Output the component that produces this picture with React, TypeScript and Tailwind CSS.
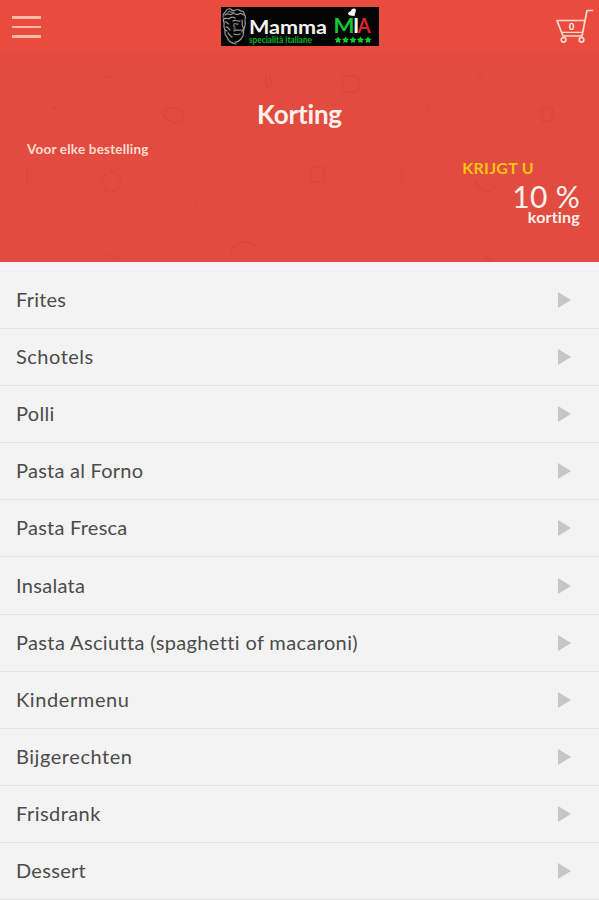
import { useState } from 'react'

interface Category {
  id: string
  name: string
  tracking: string
}

const categories: Category[] = [
  { id: 'frites', name: 'Frites', tracking: 'tracking-[0.2px]' },
  { id: 'schotels', name: 'Schotels', tracking: 'tracking-[0.5px]' },
  { id: 'polli', name: 'Polli', tracking: 'tracking-[0.3px]' },
  { id: 'forno', name: 'Pasta al Forno', tracking: 'tracking-[0.25px]' },
  { id: 'fresca', name: 'Pasta Fresca', tracking: 'tracking-[0.25px]' },
  { id: 'insalata', name: 'Insalata', tracking: 'tracking-[0.3px]' },
  { id: 'asciutta', name: 'Pasta Asciutta (spaghetti of macaroni)', tracking: 'tracking-[0.36px]' },
  { id: 'kinder', name: 'Kindermenu', tracking: 'tracking-[0.6px]' },
  { id: 'bij', name: 'Bijgerechten', tracking: 'tracking-[0.55px]' },
  { id: 'frisdrank', name: 'Frisdrank', tracking: 'tracking-[0.45px]' },
  { id: 'dessert', name: 'Dessert', tracking: 'tracking-[0.3px]' },
]

function Logo() {
  return (
    <svg width="158" height="39" viewBox="0 0 158 39" aria-label="Mamma Mia">
      <rect width="158" height="39" fill="#050505" />
      {/* engraved portrait */}
      <g fill="none" stroke="#9a9a9a" strokeWidth="1.2" strokeLinecap="round">
        <path d="M2 10c-1-4 3-4 3-6s4-3 6-1 5-2 7 0 5 0 5 3 3 3 1 6" />
        <path d="M4 8c3-3 5 1 7-1s5 2 7 0 3 1 5 1M3 12c3-2 4 1 6-1s3-1 5 0M7 5c2-1 4 1 6 0" />
        <path d="M3 11c-2 3 1 4 0 7s2 4 1 7 2 4 3 7 4 4 8 5" />
        <path d="M4 15c2-1 2 2 4 2M5 20c2-1 2 2 4 3M7 26c1 1 2 3 4 4M4 23l2 1" />
        <path d="M12 14c3-2 4 1 7 0M13 17c2-1 3 1 4 0M21 13c1 3-1 4 1 7s-2 3-1 5M13 24c3-2 5 0 7-1M13 27c2 1 4 1 6 0M24 13c1 4 0 6-1 9s1 6-3 10-4 3-6 3" />
      </g>
      <path d="M12 18c2 1 2 4 1 6" fill="none" stroke="#5d5d5d" strokeWidth="2" />
      <text x="28" y="27" fontFamily="Lato, sans-serif" fontSize="19.5" fontWeight="700" fill="#f5f5f5" textLength="78" lengthAdjust="spacingAndGlyphs">Mamma</text>
      <g fontFamily="Lato, sans-serif" fontSize="21" fontWeight="700">
        <text x="112.5" y="26" fill="#16c832" textLength="21" lengthAdjust="spacingAndGlyphs">M</text>
        <text x="132" y="26" fill="#f5f5f5">I</text>
        <text x="136.5" y="26" fill="#d8232f" textLength="13" lengthAdjust="spacingAndGlyphs">A</text>
      </g>
      {/* chef hat */}
      <path d="M129 8.5l-2-1.5c0-2 2-2.5 3-3 1-3 4-3 5-1l-1.5 6z" fill="#f8f8f8" />
      <text x="28" y="35.5" fontFamily="Lato, sans-serif" fontSize="8.5" fontWeight="700" fill="#00b51f" textLength="63" lengthAdjust="spacingAndGlyphs">specialità italiane</text>
      <g fill="#12cf2d">
        {[117, 124.5, 132, 139.5, 147].map((x) => (
          <path key={x} transform={`translate(${x} 33)`} d="M0-3.6l1.1 2.2 2.5.3-1.8 1.7.5 2.5L0 1.9l-2.3 1.2.5-2.5-1.8-1.7 2.5-.3z" />
        ))}
      </g>
    </svg>
  )
}

function CartIcon() {
  return (
    <svg width="40" height="36" viewBox="0 0 40 36" fill="none" stroke="#fbd9cf" strokeWidth="1.7" strokeLinecap="round" strokeLinejoin="round">
      <path d="M36.5 2.5h-5.5L26 28H7L1 12.5h28" />
      <path d="M5.5 24.3h21" strokeWidth="1.2" />
      <circle cx="7.6" cy="31.8" r="2.3" />
      <circle cx="25.5" cy="31.8" r="2.3" />
      <text x="15.7" y="22" textAnchor="middle" fontFamily="Lato, sans-serif" fontSize="9" fontWeight="700" fill="#fff" stroke="none">0</text>
    </svg>
  )
}

function Pattern() {
  return (
    <svg className="absolute inset-0" width="599" height="210" viewBox="0 0 599 210" fill="none" stroke="#cf4039" strokeOpacity=".32" strokeWidth="1.8">
      <path d="M164 60c4-6 18-6 19 1s-5 11-10 9-9-3-9-8M102 23l9 3M27 117v14M266 22v14l6-5-3-8M52 55l6 3" />
      <circle cx="111" cy="130" r="10" strokeDasharray="6 3" />
      <path d="M231 202c-1-12 22-18 26-5M195 147v5M107 203l12 3" />
      <rect x="343" y="24" width="16" height="16" rx="4" />
      <rect x="311" y="115" width="13" height="15" />
      <path d="M402 118v12M425 53l5 4M541 57l12-1-1 12-9 2zM476 129c2 14 20 14 20 0M476 24l7 3M485 205l6 3" />
    </svg>
  )
}

export default function App() {
  const [selected, setSelected] = useState<string | null>(null)

  return (
    <div className="h-[900px] w-[599px] overflow-hidden bg-[#f3f3f3] font-['Lato',sans-serif]">
      <header className="flex h-[52px] items-start justify-between bg-[#e94c3f] pl-3">
        <button aria-label="Menu" className="mt-4 flex w-[29px] flex-col gap-[7px]">
          <span className="h-[2.5px] w-full bg-[#f9b9a5]" />
          <span className="h-[2.5px] w-full bg-[#f9b9a5]" />
          <span className="h-[2.5px] w-full bg-[#f9b9a5]" />
        </button>
        <div className="mt-[7px] ml-[3px]">
          <Logo />
        </div>
        <button aria-label="Winkelwagen" className="mt-2 mr-[3px]">
          <CartIcon />
        </button>
      </header>

      {/* Discount banner */}
      <section className="relative h-[210px] bg-[#e24b3f] text-[#fff1ec]">
        <Pattern />
        <div className="relative flex flex-col">
          <h1 className="mt-[46px] text-center text-[26px] leading-8 font-bold tracking-[-0.2px]">Korting</h1>
          <p className="mt-2.5 pl-[27px] text-[13.5px] leading-[18px] font-bold tracking-[0.2px] text-[#ffdcd2]">Voor elke bestelling</p>
          <p className="pr-[65px] text-right text-base leading-5 font-bold tracking-[0.3px] text-[#f6c40f]">KRIJGT U</p>
          <p className="mt-0.5 pr-[19px] text-right text-[30px] leading-8 tracking-[0.3px]">10 %</p>
          <p className="-mt-1 pr-[19px] text-right text-base leading-[18px] font-bold tracking-[0.2px]">korting</p>
        </div>
      </section>

      <div className="h-2.5 border-b border-[#eeeeef] bg-[#f4f3f6]" />
      <ul>
        {categories.map((category) => (
          <li key={category.id} className="h-[57.1px] border-b border-[#e4e4e4]">
            <button
              onClick={() => setSelected(category.id)}
              aria-pressed={selected === category.id}
              className="flex h-full w-full items-center justify-between pr-7 pl-4 text-left"
            >
              <span className={`-mt-0.5 text-xl leading-6 whitespace-nowrap text-[#4b4b4b] ${category.tracking}`}>{category.name}</span>
              <svg width="13" height="16" viewBox="0 0 13 16">
                <path d="M0 0l13 8-13 8z" fill="#c6c6c6" />
              </svg>
            </button>
          </li>
        ))}
      </ul>
    </div>
  )
}
